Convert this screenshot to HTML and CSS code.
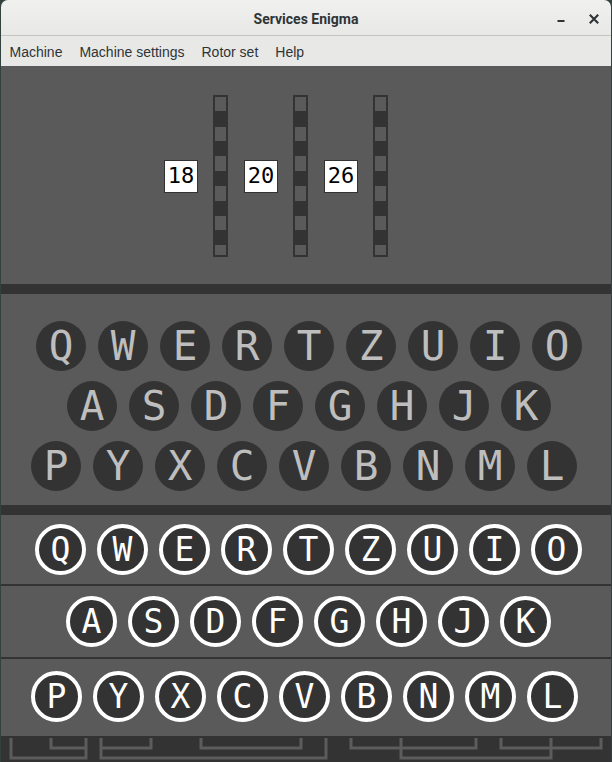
FILE: index.html
```html
<!DOCTYPE html>
<html>
<head>
<meta charset="utf-8">
<title>Services Enigma</title>
<link rel="stylesheet" href="styles.css">
</head>
<body>
<div class="window">
  <header class="titlebar">
    <span class="title">Services Enigma</span>
    <div class="controls">
      <svg class="ctl" width="16" height="16" viewBox="0 0 16 16"><rect x="4.5" y="9" width="7" height="2" fill="#2e3436"/></svg>
      <svg class="ctl" width="16" height="16" viewBox="0 0 16 16"><path d="M3.8 3.8 L12.2 12.2 M12.2 3.8 L3.8 12.2" stroke="#2e3436" stroke-width="2.1" fill="none"/></svg>
    </div>
  </header>
  <nav class="menubar">
    <span class="menu-item">Machine</span>
    <span class="menu-item">Machine settings</span>
    <span class="menu-item">Rotor set</span>
    <span class="menu-item">Help</span>
  </nav>
  <section class="rotors">
    <div class="rotor"><div class="rotor-num">18</div><div class="strip"></div></div>
    <div class="rotor"><div class="rotor-num">20</div><div class="strip"></div></div>
    <div class="rotor"><div class="rotor-num">26</div><div class="strip"></div></div>
  </section>
  <div class="bar"></div>
  <section class="lampboard">
    <div class="lamp-row row-1">
      <span class="lamp">Q</span><span class="lamp">W</span><span class="lamp">E</span><span class="lamp">R</span><span class="lamp">T</span><span class="lamp">Z</span><span class="lamp">U</span><span class="lamp">I</span><span class="lamp">O</span>
    </div>
    <div class="lamp-row row-2">
      <span class="lamp">A</span><span class="lamp">S</span><span class="lamp">D</span><span class="lamp">F</span><span class="lamp">G</span><span class="lamp">H</span><span class="lamp">J</span><span class="lamp">K</span>
    </div>
    <div class="lamp-row row-3">
      <span class="lamp">P</span><span class="lamp">Y</span><span class="lamp">X</span><span class="lamp">C</span><span class="lamp">V</span><span class="lamp">B</span><span class="lamp">N</span><span class="lamp">M</span><span class="lamp">L</span>
    </div>
  </section>
  <div class="bar"></div>
  <section class="keyboard">
    <div class="key-row krow-1">
      <span class="key">Q</span><span class="key">W</span><span class="key">E</span><span class="key">R</span><span class="key">T</span><span class="key">Z</span><span class="key">U</span><span class="key">I</span><span class="key">O</span>
    </div>
    <div class="key-row krow-2">
      <span class="key">A</span><span class="key">S</span><span class="key">D</span><span class="key">F</span><span class="key">G</span><span class="key">H</span><span class="key">J</span><span class="key">K</span>
    </div>
    <div class="key-row krow-3">
      <span class="key">P</span><span class="key">Y</span><span class="key">X</span><span class="key">C</span><span class="key">V</span><span class="key">B</span><span class="key">N</span><span class="key">M</span><span class="key">L</span>
    </div>
  </section>
  <footer class="plugboard">
    <svg width="610" height="26" viewBox="0 0 610 26">
      <g fill="none" stroke="#5c5c5c" stroke-width="3">
        <path d="M10 2 V22 H85 V2"/>
        <path d="M100 2 V22 H325 V2"/>
        <path d="M400 2 V22 H550 V2"/>
        <path d="M50 2 V12 H85"/>
        <path d="M100 12 H150 V2"/>
        <path d="M200 2 V12 H300 V2"/>
        <path d="M350 2 V12 H475 V2"/>
        <path d="M500 2 V12 H600 V2"/>
      </g>
    </svg>
  </footer>
</div>
</body>
</html>
```

FILE: styles.css
```css
html, body {
  margin: 0;
  padding: 0;
}
body {
  background: #34423f;
  width: 612px;
  height: 762px;
  overflow: hidden;
  font-family: "Liberation Sans", Arial, sans-serif;
}
.window {
  margin: 0 1px;
  height: 762px;
  display: flex;
  flex-direction: column;
  background: #5a5a5a;
  border-radius: 7px 7px 0 0;
  overflow: hidden;
}
.titlebar {
  height: 36px;
  box-sizing: border-box;
  border-bottom: 1px solid #c4c4c0;
  background: linear-gradient(#f0f0ef, #e8e8e7);
  display: grid;
  grid-template-columns: 1fr auto 1fr;
  align-items: center;
  flex: none;
}
.title {
  grid-column: 2;
  font-family: Roboto, "Liberation Sans", sans-serif;
  font-weight: 700;
  font-size: 14px;
  color: #2e3436;
  padding-top: 2px;
}
.controls {
  grid-column: 3;
  justify-self: end;
  display: flex;
  align-items: center;
  gap: 17px;
  padding: 3px 9px 0 0;
}
.ctl {
  display: block;
}
.menubar {
  height: 30px;
  box-sizing: border-box;
  background: #e8e8e7;
  display: flex;
  align-items: center;
  padding-top: 2px;
  font-size: 14px;
  color: #2e3436;
  flex: none;
}
.menu-item {
  padding: 0 8.5px;
}
.rotors {
  height: 218px;
  box-sizing: border-box;
  display: flex;
  align-items: center;
  gap: 16px;
  padding: 2px 0 0 163px;
  flex: none;
}
.rotor {
  display: flex;
  align-items: center;
  gap: 15px;
}
.rotor-num {
  width: 32px;
  height: 31px;
  border: 1px solid #333;
  background: #fff;
  color: #000;
  font-family: "DejaVu Sans Mono", monospace;
  font-size: 22px;
  display: flex;
  align-items: center;
  justify-content: center;
  line-height: 1;
}
.strip {
  width: 11px;
  height: 158px;
  border: 2px solid #333;
  background: repeating-linear-gradient(to bottom, #5a5a5a 0 14.5px, #333 14.5px 29.7px);
}
.bar {
  height: 10px;
  background: #333;
  flex: none;
}
.lampboard {
  height: 211px;
  box-sizing: border-box;
  padding-top: 27px;
  display: flex;
  flex-direction: column;
  gap: 10px;
  flex: none;
}
.lamp-row {
  display: flex;
  gap: 12px;
}
.row-1 { padding-left: 35px; }
.row-2 { padding-left: 66px; }
.row-3 { padding-left: 30px; }
.lamp {
  width: 50px;
  height: 50px;
  border-radius: 50%;
  background: #333;
  color: #bebebe;
  font-family: "DejaVu Sans Mono", monospace;
  font-size: 41px;
  line-height: 1;
  display: flex;
  align-items: center;
  justify-content: center;
}
.keyboard {
  display: flex;
  flex-direction: column;
  flex: none;
}
.key-row {
  display: flex;
  align-items: center;
  gap: 11px;
  box-sizing: border-box;
}
.krow-1 {
  height: 71px;
  border-bottom: 2px solid #333;
  padding-left: 34px;
}
.krow-2 {
  height: 73px;
  border-bottom: 2px solid #333;
  padding-left: 65px;
}
.krow-3 {
  height: 77px;
  padding-left: 30px;
  padding-bottom: 3px;
}
.key {
  width: 51px;
  height: 51px;
  box-sizing: border-box;
  border: 4px solid #fff;
  border-radius: 50%;
  background: #333;
  color: #fff;
  font-family: "DejaVu Sans Mono", monospace;
  font-size: 33px;
  line-height: 1;
  display: flex;
  align-items: center;
  justify-content: center;
}
.plugboard {
  height: 26px;
  background: #333;
  flex: none;
}
.plugboard svg {
  display: block;
}
```
